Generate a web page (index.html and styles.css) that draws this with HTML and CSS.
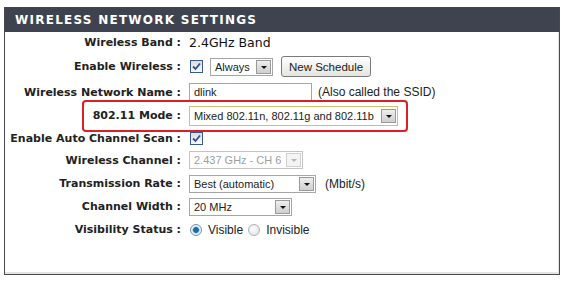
FILE: index.html
```html
<!DOCTYPE html>
<html lang="en">
<head>
  <meta charset="UTF-8" />
  <title>Wireless Network Settings</title>
  <link rel="stylesheet" href="styles.css">
</head>
<body>
  <div class="panel">
    <div class="panel-head">WIRELESS NETWORK SETTINGS</div>

    <div class="form">
      <div class="label">Wireless Band :</div>
      <div class="value"><span class="band">2.4GHz Band</span></div>

      <div class="label">Enable Wireless :</div>
      <div class="value">
        <span class="check"><svg width="9" height="9" viewBox="0 0 9 9"><path d="M1 4.5 L3.5 7 L8 1.5" fill="none" stroke="#2a4f9e" stroke-width="1.8"/></svg></span>
        <div class="select sel-always"><span class="sel-text">Always</span><span class="arrow"></span></div>
        <button class="btn">New Schedule</button>
      </div>

      <div class="label">Wireless Network Name :</div>
      <div class="value">
        <div class="input">dlink</div>
        <span class="note">(Also called the SSID)</span>
      </div>

      <div class="label mode-label">802.11 Mode :</div>
      <div class="value">
        <div class="select sel-mode"><span class="sel-text">Mixed 802.11n, 802.11g and 802.11b</span><span class="arrow"></span></div>
      </div>

      <div class="label">Enable Auto Channel Scan :</div>
      <div class="value">
        <span class="check"><svg width="9" height="9" viewBox="0 0 9 9"><path d="M1 4.5 L3.5 7 L8 1.5" fill="none" stroke="#2a4f9e" stroke-width="1.8"/></svg></span>
      </div>

      <div class="label">Wireless Channel :</div>
      <div class="value">
        <div class="select sel-channel disabled"><span class="sel-text">2.437 GHz - CH 6</span><span class="arrow"></span></div>
      </div>

      <div class="label">Transmission Rate :</div>
      <div class="value">
        <div class="select sel-rate"><span class="sel-text">Best (automatic)</span><span class="arrow"></span></div>
        <span class="note">(Mbit/s)</span>
      </div>

      <div class="label">Channel Width :</div>
      <div class="value">
        <div class="select sel-width"><span class="sel-text">20 MHz</span><span class="arrow"></span></div>
      </div>

      <div class="label">Visibility Status :</div>
      <div class="value">
        <span class="radio on"></span><span class="note">Visible</span>
        <span class="radio"></span><span class="note">Invisible</span>
      </div>
    </div>
  </div>
</body>
</html>
```

FILE: styles.css
```css
* {
  margin: 0;
  padding: 0;
  box-sizing: border-box;
}
html, body {
  background: #fff;
  font-family: "DejaVu Sans", Verdana, sans-serif;
}
.panel {
  margin: 7px 5px 0 4px;
  height: 268px;
  border: 1px solid #4a4a4a;
  border-top: none;
  box-shadow: inset -1px -2px 0 #e4e4e4;
}
.panel-head {
  height: 25px;
  background: #3f434f;
  color: #fff;
  font-weight: bold;
  font-size: 12px;
  letter-spacing: 1.25px;
  padding-left: 10px;
  line-height: 26px;
}
.form {
  display: grid;
  grid-template-columns: 176px 1fr;
  grid-template-rows: 20px 29px 22px 25px 20px 24px 23px 23px 23px;
  column-gap: 8px;
  align-items: center;
}
.label {
  text-align: right;
  font-weight: bold;
  font-size: 11px;
  color: #222;
  white-space: nowrap;
}
.mode-label {
  position: relative;
}
/* red highlight round the mode row */
.mode-label::before {
  content: "";
  position: absolute;
  left: 77px;
  top: 50%;
  transform: translateY(-50%);
  width: 322px;
  height: 28px;
  border: 2px solid #dc1f26;
  border-radius: 4px;
}
.value {
  display: flex;
  align-items: center;
  font-family: "Liberation Sans", Arial, sans-serif;
  font-size: 12px;
  color: #222;
}
.band {
  font-family: "DejaVu Sans", Verdana, sans-serif;
  font-size: 12.5px;
  color: #111;
}
.note {
  font-size: 12px;
  color: #222;
}
.check {
  width: 13px;
  height: 13px;
  margin-left: 1px;
  border: 1px solid #3a5a94;
  background: linear-gradient(#dcdcd8, #fbfbfa);
  display: flex;
  align-items: center;
  justify-content: center;
}
.select {
  display: flex;
  align-items: center;
  justify-content: space-between;
  border: 1px solid #a6a6a6;
  background: #fff;
  font-size: 11px;
  padding: 0 1px 0 4px;
}
.sel-text {
  white-space: nowrap;
}
.arrow {
  width: 15px;
  height: 14px;
  border: 1px solid #9a9a9a;
  background: linear-gradient(#eeeeee, #cfcfcf);
  position: relative;
}
.arrow::after {
  content: "";
  position: absolute;
  left: 4px;
  top: 5px;
  border-left: 3px solid transparent;
  border-right: 3px solid transparent;
  border-top: 3px solid #111;
}
.sel-always {
  width: 63px;
  height: 18px;
  margin-left: 7px;
}
.sel-mode {
  width: 209px;
  height: 20px;
  border-color: #d9bd6a;
  font-size: 11px;
}
.sel-channel {
  width: 114px;
  height: 18px;
}
.sel-rate {
  width: 127px;
  height: 18px;
  margin-right: 9px;
}
.sel-width {
  width: 103px;
  height: 18px;
}
.disabled {
  color: #a0a0a0;
  border-color: #c4c4c4;
}
.disabled .arrow {
  border-color: #d0d0d0;
  background: #f4f4f4;
}
.disabled .arrow::after {
  border-top-color: #b5b5b5;
}
.btn {
  margin-left: 8px;
  height: 21px;
  padding: 0 7px;
  border: 1px solid #7b7b7b;
  border-radius: 3px;
  background: linear-gradient(#ffffff, #e4e4e0);
  font-family: "Liberation Sans", Arial, sans-serif;
  font-size: 11.5px;
  color: #222;
}
.input {
  width: 123px;
  height: 18px;
  border: 1px solid #a6a6a6;
  font-size: 11px;
  padding-left: 4px;
  line-height: 16px;
  margin-right: 6px;
}
.radio {
  width: 12px;
  height: 12px;
  margin: 0 6px 0 1px;
  border-radius: 50%;
  border: 1px solid #a9b4bf;
  background: radial-gradient(circle at 40% 40%, #fff, #dcdcdc);
}
.radio.on {
  border-color: #6d8fb3;
  background: radial-gradient(circle, #1b6aa8 0 2.5px, #7fb4da 3px, #f2f6fa 4px);
}
.note + .radio {
  margin-left: 5px;
}
```
